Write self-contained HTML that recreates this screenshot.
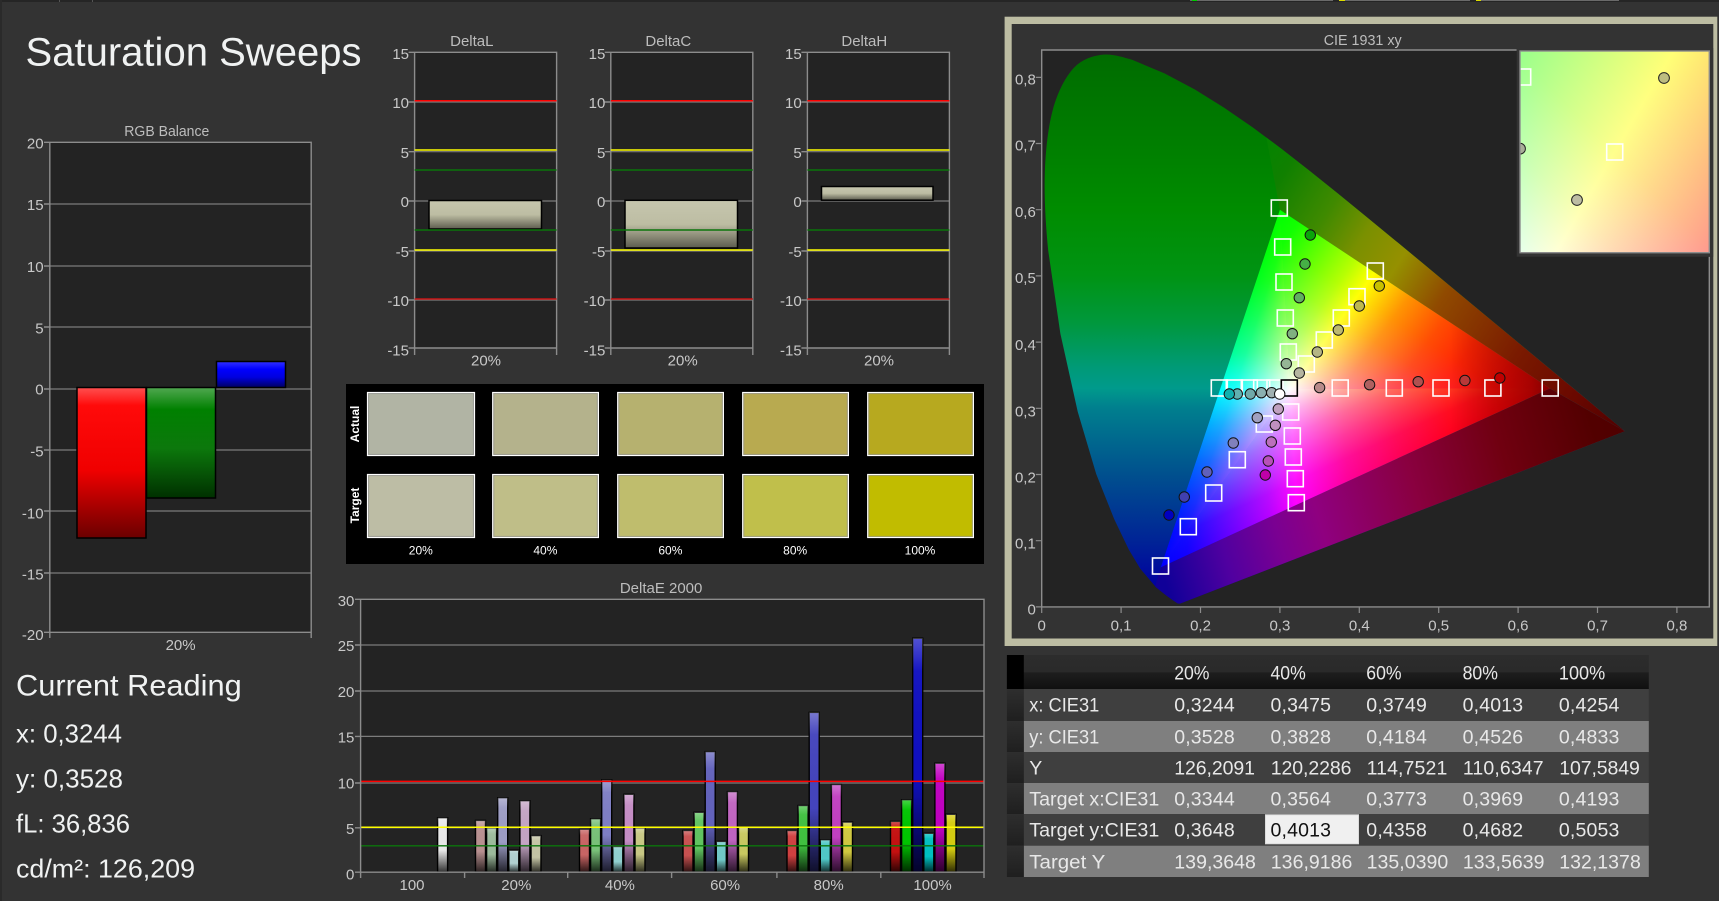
<!DOCTYPE html>
<html><head><meta charset="utf-8"><title>Saturation Sweeps</title>
<style>
html,body{margin:0;padding:0;background:#333;width:1719px;height:901px;overflow:hidden}
svg{display:block}
text{font-family:"Liberation Sans",sans-serif}
.a{font-size:15px;fill:#c8c8c8}
.t{font-size:15px;fill:#bdbdbd}
.e{text-anchor:end}
.m{text-anchor:middle}
.s{font-size:12px;fill:#fff;text-anchor:middle}
.b{font-size:12px;font-weight:bold;fill:#fff;text-anchor:middle}
.r{font-size:19.5px;fill:#e8e8e8}
.h{fill:#f0f2f2}
.sc{mix-blend-mode:screen}
</style></head><body>
<svg width="1719" height="901" viewBox="0 0 1719 901" xmlns="http://www.w3.org/2000/svg">
<defs>
<linearGradient id="gRed" x1="0" y1="0" x2="0" y2="1"><stop offset="0" stop-color="#ff5050"/><stop offset=".12" stop-color="#ff0a0a"/><stop offset=".55" stop-color="#f00000"/><stop offset="1" stop-color="#6a0000"/></linearGradient>
<linearGradient id="gGrn" x1="0" y1="0" x2="0" y2="1"><stop offset="0" stop-color="#50a850"/><stop offset=".2" stop-color="#008000"/><stop offset=".55" stop-color="#0c780c"/><stop offset="1" stop-color="#003000"/></linearGradient>
<linearGradient id="gBlu" x1="0" y1="0" x2="0" y2="1"><stop offset="0" stop-color="#3030ff"/><stop offset=".3" stop-color="#0000ff"/><stop offset=".6" stop-color="#0000e0"/><stop offset="1" stop-color="#000060"/></linearGradient>
<linearGradient id="gTan" x1="0" y1="0" x2="0" y2="1"><stop offset="0" stop-color="#c6c6ae"/><stop offset=".5" stop-color="#bdbda3"/><stop offset="1" stop-color="#5c5c4e"/></linearGradient>
<linearGradient id="gShade" x1="0" y1="0" x2="0" y2="1"><stop offset="0" stop-color="#fff" stop-opacity=".28"/><stop offset=".14" stop-color="#fff" stop-opacity=".03"/><stop offset=".6" stop-color="#000" stop-opacity="0"/><stop offset="1" stop-color="#000" stop-opacity=".78"/></linearGradient>
<linearGradient id="gHead" x1="0" y1="0" x2="0" y2="1"><stop offset="0" stop-color="#2c2c2c"/><stop offset=".5" stop-color="#2a2a2a"/><stop offset=".52" stop-color="#1e1e1e"/><stop offset="1" stop-color="#101010"/></linearGradient>
<linearGradient id="gSide" x1="0" y1="0" x2="0" y2="1"><stop offset="0" stop-color="#2e2e2e"/><stop offset="1" stop-color="#1f1f1f"/></linearGradient>

<linearGradient id="outerL" gradientUnits="userSpaceOnUse" x1="0" y1="54.9" x2="0" y2="606.9">
<stop offset="0" stop-color="#006c00"/><stop offset=".16" stop-color="#007e00"/><stop offset=".28" stop-color="#008c00"/><stop offset=".4" stop-color="#009414"/><stop offset=".484" stop-color="#00983c"/><stop offset=".568" stop-color="#009a78"/><stop offset=".604" stop-color="#009a8c"/><stop offset=".64" stop-color="#007f8e"/><stop offset=".76" stop-color="#00508e"/><stop offset=".88" stop-color="#002496"/><stop offset=".964" stop-color="#0000a0"/><stop offset="1" stop-color="#0000a0"/></linearGradient>
<linearGradient id="outerR" gradientUnits="userSpaceOnUse" x1="1228" y1="176.9" x2="1625" y2="431">
<stop offset="0" stop-color="#008400"/><stop offset=".096" stop-color="#108000"/><stop offset=".217" stop-color="#3f8a00"/><stop offset=".31" stop-color="#7a9000"/><stop offset=".403" stop-color="#959000"/><stop offset=".52" stop-color="#904a00"/><stop offset=".72" stop-color="#7a1a00"/><stop offset=".87" stop-color="#6a0800"/><stop offset="1" stop-color="#500000"/></linearGradient>
<linearGradient id="outerB" gradientUnits="userSpaceOnUse" x1="1160.8" y1="567.2" x2="1624.8" y2="431.2">
<stop offset="0" stop-color="#100098"/><stop offset=".134" stop-color="#5000a0"/><stop offset=".25" stop-color="#7a0092"/><stop offset=".341" stop-color="#8f0080"/><stop offset=".548" stop-color="#8a0040"/><stop offset=".746" stop-color="#700010"/><stop offset=".94" stop-color="#520000"/><stop offset="1" stop-color="#500000"/></linearGradient>

<!-- channel curve templates -->
<linearGradient id="sR"><stop offset="0" stop-color="#000"/><stop offset=".2" stop-color="#140000"/><stop offset=".5" stop-color="#660000"/><stop offset=".8" stop-color="#b80000"/><stop offset="1" stop-color="#f00"/></linearGradient>
<linearGradient id="sRL"><stop offset="0" stop-color="#000"/><stop offset=".2" stop-color="#1a0000"/><stop offset=".6" stop-color="#8c0000"/><stop offset=".8" stop-color="#c70000"/><stop offset="1" stop-color="#f00"/></linearGradient>
<linearGradient id="sG"><stop offset="0" stop-color="#000"/><stop offset=".2" stop-color="#000d00"/><stop offset=".4" stop-color="#003800"/><stop offset=".6" stop-color="#006b00"/><stop offset=".8" stop-color="#00ad00"/><stop offset="1" stop-color="#0f0"/></linearGradient>
<linearGradient id="sGL"><stop offset="0" stop-color="#000"/><stop offset=".2" stop-color="#000800"/><stop offset=".42" stop-color="#002400"/><stop offset=".6" stop-color="#004d00"/><stop offset=".8" stop-color="#009400"/><stop offset="1" stop-color="#0f0"/></linearGradient>
<linearGradient id="sB"><stop offset="0" stop-color="#000"/><stop offset=".2" stop-color="#000005"/><stop offset=".4" stop-color="#000021"/><stop offset=".6" stop-color="#000059"/><stop offset=".8" stop-color="#00009c"/><stop offset="1" stop-color="#00f"/></linearGradient>

<linearGradient id="t1R" href="#sR" gradientUnits="userSpaceOnUse" x1="1279.9" y1="209.7" x2="1371.7" y2="276.3"/>
<linearGradient id="t2G" href="#sGL" gradientUnits="userSpaceOnUse" x1="1549.9" y1="388.4" x2="1379.9" y2="265.1"/>
<linearGradient id="bTop" href="#sB" gradientUnits="userSpaceOnUse" x1="1369.4" y1="269" x2="1290" y2="389"/>
<linearGradient id="gBot" href="#sG" gradientUnits="userSpaceOnUse" x1="1335.1" y1="487" x2="1290" y2="389"/>
<linearGradient id="rLeft" href="#sRL" gradientUnits="userSpaceOnUse" x1="1227.1" y1="368" x2="1290" y2="389"/>
<linearGradient id="t3B" href="#sB" gradientUnits="userSpaceOnUse" x1="1549.9" y1="388.4" x2="1290.8" y2="402.9"/>
<linearGradient id="t4R" href="#sR" gradientUnits="userSpaceOnUse" x1="1160.8" y1="567.2" x2="1299.6" y2="559.4"/>
<linearGradient id="t5G" href="#sG" gradientUnits="userSpaceOnUse" x1="1160.8" y1="567.2" x2="1160.8" y2="389"/>
<linearGradient id="t6B" href="#sB" gradientUnits="userSpaceOnUse" x1="1279.9" y1="209.7" x2="1279.9" y2="389"/>

<linearGradient id="cDark" gradientUnits="userSpaceOnUse" x1="1450" y1="0" x2="1552" y2="0">
<stop offset="0" stop-color="#000" stop-opacity="0"/><stop offset=".42" stop-color="#000" stop-opacity=".2"/><stop offset=".8" stop-color="#000" stop-opacity=".35"/><stop offset="1" stop-color="#000" stop-opacity=".5"/></linearGradient>

<linearGradient id="iR" gradientUnits="userSpaceOnUse" x1="1554.7" y1="-10.4" x2="1670" y2="56.7"><stop offset="0" stop-color="#990000"/><stop offset="1" stop-color="#f00"/></linearGradient>
<linearGradient id="iG" gradientUnits="userSpaceOnUse" x1="1670" y1="56.7" x2="1785.3" y2="123.8"><stop offset="0" stop-color="#0f0"/><stop offset="1" stop-color="#009900"/></linearGradient>
<linearGradient id="iB" gradientUnits="userSpaceOnUse" x1="1520" y1="252.7" x2="1715.6" y2="57"><stop offset="0" stop-color="#0000eb"/><stop offset=".25" stop-color="#0000b4"/><stop offset=".5" stop-color="#00008c"/><stop offset="1" stop-color="#000070"/></linearGradient>

<clipPath id="locus"><path d="M1179.9 603.6L1177.8 603.5 1172.2 599.7 1166 595.2 1156 587.2 1140.2 568.6 1128.7 549.4 1114.2 519.1 1096.2 474 1077.7 411.6 1060.4 333.7 1048.2 250.5C1045.6 223.8 1044.05 196.8 1044.8 173.4C1045.55 150 1048.07 127.65 1052.7 110.3C1057.33 92.95 1064.6 78.53 1072.6 69.3C1080.6 60.07 1090.73 56.47 1100.7 54.9C1110.67 53.33 1121.77 56.82 1132.4 59.9L1164.5 73.4 1194.9 89.5 1224 107.6 1252.7 127.4 1281.2 148.6 1309.5 170.7 1337.9 193.5 1366.2 216.6 1394.3 239.7 1421.9 262.5 1448.6 284.8 1474.3 306.1 1498.4 326.1 1520.4 344.4 1539.5 360.3 1570.3 385.8 1590.8 402.8 1603.8 413.6 1618.1 425.5 1625 431.3Z"/></clipPath>
<clipPath id="tri"><polygon points="1549.9,388.4 1279.9,209.7 1160.8,567.2"/></clipPath>
<clipPath id="insetClip"><rect x="1520" y="51" width="189.3" height="201.7"/></clipPath>

<g id="dGrid">
<rect x="0" y="52.3" width="142" height="295.7" fill="#232323"/>
<path d="M0 102H142M0 151.7H142M0 201H142M0 251H142M0 300H142" stroke="#7c7c7c" stroke-width="1.2" fill="none"/>
<path d="M0 355V52.3H142V355M-6 52.3H0M-6 102H0M-6 151.7H0M-6 201H0M-6 251H0M-6 300H0M-6 348H142" stroke="#8c8c8c" stroke-width="1.4" fill="none"/>
</g>
<g id="dLines" fill="none" stroke-width="1.5">
<path d="M0 100.7H142" stroke="#f00"/>
<path d="M0 150H142M0 250H142" stroke="#ff0"/>
<path d="M0 170H142M0 230H142" stroke="#0b740b"/>
<path d="M0 299H142" stroke="#c81414"/>
</g>
</defs>

<rect width="1719" height="901" fill="#333"/>
<!-- top strip -->
<rect width="1719" height="2" fill="#252525"/>
<rect width="2" height="901" fill="#2a2a2a"/>
<rect x="59" y="0" width="1" height="2" fill="#555"/><rect x="92" y="0" width="1" height="2" fill="#555"/>
<rect x="1190" y="0" width="143" height="1" fill="#6a6a6a"/><rect x="1339" y="0" width="131" height="1" fill="#6a6a6a"/><rect x="1476" y="0" width="143" height="1" fill="#6a6a6a"/>
<rect x="1192" y="0" width="5" height="1" fill="#0c0"/><rect x="1339" y="0" width="6" height="1" fill="#dd0"/><rect x="1476" y="0" width="5" height="1" fill="#dd0"/>

<!-- Title -->
<text class="h" x="25.5" y="65.7" font-size="40" textLength="336" lengthAdjust="spacingAndGlyphs">Saturation Sweeps</text>

<!-- RGB Balance -->
<rect x="49.8" y="142.3" width="261.4" height="490" fill="#232323"/>
<path d="M49.8 204H311.2M49.8 266H311.2M49.8 327H311.2M49.8 389H311.2M49.8 450H311.2M49.8 511H311.2M49.8 573H311.2" stroke="#7c7c7c" stroke-width="1.2" fill="none"/>
<path d="M49.8 638V142.3H311.2V638M44 142.3H49.8M44 204H49.8M44 266H49.8M44 327H49.8M44 389H49.8M44 450H49.8M44 511H49.8M44 573H49.8M44 632.3H311.2" stroke="#8c8c8c" stroke-width="1.4" fill="none"/>
<rect x="77" y="387.5" width="69" height="150.5" fill="url(#gRed)" stroke="#000" stroke-width="1.5"/>
<rect x="146.5" y="387.5" width="69" height="110.5" fill="url(#gGrn)" stroke="#000" stroke-width="1.5"/>
<rect x="216.5" y="361.5" width="69" height="26" fill="url(#gBlu)" stroke="#000" stroke-width="1.5"/>
<text class="t m" x="166.8" y="136" textLength="85" lengthAdjust="spacingAndGlyphs">RGB Balance</text>
<text class="a e" x="43.6" y="148.7">20</text><text class="a e" x="43.6" y="210">15</text><text class="a e" x="43.6" y="272">10</text><text class="a e" x="43.6" y="333.3">5</text><text class="a e" x="43.6" y="394.7">0</text><text class="a e" x="43.6" y="456.5">-5</text><text class="a e" x="43.6" y="518.3">-10</text><text class="a e" x="43.6" y="579.3">-15</text><text class="a e" x="43.6" y="640">-20</text>
<text class="a m" x="180.6" y="650">20%</text>

<!-- Current Reading -->
<text class="h" x="16" y="695.7" font-size="30" textLength="225.7" lengthAdjust="spacingAndGlyphs">Current Reading</text>
<text class="h" x="16" y="742.7" font-size="26" textLength="106" lengthAdjust="spacingAndGlyphs">x: 0,3244</text>
<text class="h" x="16" y="787.3" font-size="26" textLength="107" lengthAdjust="spacingAndGlyphs">y: 0,3528</text>
<text class="h" x="16" y="832.3" font-size="26" textLength="114" lengthAdjust="spacingAndGlyphs">fL: 36,836</text>
<text class="h" x="16" y="877.3" font-size="26" textLength="179" lengthAdjust="spacingAndGlyphs">cd/m²: 126,209</text>

<!-- DeltaL -->
<use href="#dGrid" x="414.6"/>
<rect x="429" y="200.5" width="112.5" height="28.5" fill="url(#gTan)" stroke="#000" stroke-width="1.5"/>
<use href="#dLines" x="414.6"/>
<text class="t m" x="471.8" y="46">DeltaL</text>
<text class="a e" x="409" y="59">15</text><text class="a e" x="409" y="108">10</text><text class="a e" x="409" y="158">5</text><text class="a e" x="409" y="207">0</text><text class="a e" x="409" y="257">-5</text><text class="a e" x="409" y="306">-10</text><text class="a e" x="409" y="355.7">-15</text>
<text class="a m" x="486" y="365.7">20%</text>

<!-- DeltaC -->
<use href="#dGrid" x="610.8"/>
<rect x="625" y="200.3" width="112.5" height="47.7" fill="url(#gTan)" stroke="#000" stroke-width="1.5"/>
<use href="#dLines" x="610.8"/>
<text class="t m" x="668.3" y="46">DeltaC</text>
<text class="a e" x="605.3" y="59">15</text><text class="a e" x="605.3" y="108">10</text><text class="a e" x="605.3" y="158">5</text><text class="a e" x="605.3" y="207">0</text><text class="a e" x="605.3" y="257">-5</text><text class="a e" x="605.3" y="306">-10</text><text class="a e" x="605.3" y="355.7">-15</text>
<text class="a m" x="682.7" y="365.7">20%</text>

<!-- DeltaH -->
<use href="#dGrid" x="807.4"/>
<rect x="821.5" y="186.5" width="111.5" height="13.7" fill="url(#gTan)" stroke="#000" stroke-width="1.5"/>
<use href="#dLines" x="807.4"/>
<text class="t m" x="864.3" y="46">DeltaH</text>
<text class="a e" x="801.7" y="59">15</text><text class="a e" x="801.7" y="108">10</text><text class="a e" x="801.7" y="158">5</text><text class="a e" x="801.7" y="207">0</text><text class="a e" x="801.7" y="257">-5</text><text class="a e" x="801.7" y="306">-10</text><text class="a e" x="801.7" y="355.7">-15</text>
<text class="a m" x="879" y="365.7">20%</text>

<!-- Swatches -->
<rect x="346" y="384" width="638" height="180" fill="#000"/>
<g stroke="#fff" stroke-width="1.2">
<rect x="367.5" y="392.5" width="107" height="63" fill="#b1b4a4"/><rect x="492.7" y="392.5" width="105.7" height="63" fill="#b4b28c"/><rect x="617.7" y="392.5" width="105.7" height="63" fill="#b6b16f"/><rect x="742.7" y="392.5" width="105.7" height="63" fill="#b8aa50"/><rect x="867.7" y="392.5" width="105.7" height="63" fill="#b7a91f"/>
<rect x="367.5" y="474.5" width="107" height="63" fill="#bdbda5"/><rect x="492.7" y="474.5" width="105.7" height="63" fill="#bfbe88"/><rect x="617.7" y="474.5" width="105.7" height="63" fill="#bfbd6d"/><rect x="742.7" y="474.5" width="105.7" height="63" fill="#c0bf4b"/><rect x="867.7" y="474.5" width="105.7" height="63" fill="#c1bc00"/>
</g>
<g fill="none" stroke="#8f8f8f" stroke-width="1" opacity=".7">
<rect x="368.6" y="393.6" width="104.8" height="60.8"/><rect x="493.8" y="393.6" width="103.5" height="60.8"/><rect x="618.8" y="393.6" width="103.5" height="60.8"/><rect x="743.8" y="393.6" width="103.5" height="60.8"/><rect x="868.8" y="393.6" width="103.5" height="60.8"/>
<rect x="368.6" y="475.6" width="104.8" height="60.8"/><rect x="493.8" y="475.6" width="103.5" height="60.8"/><rect x="618.8" y="475.6" width="103.5" height="60.8"/><rect x="743.8" y="475.6" width="103.5" height="60.8"/><rect x="868.8" y="475.6" width="103.5" height="60.8"/>
</g>
<text class="b" transform="translate(359 424) rotate(-90)">Actual</text>
<text class="b" transform="translate(359 505.5) rotate(-90)">Target</text>
<text class="s" x="420.8" y="554.6">20%</text><text class="s" x="545.4" y="554.6">40%</text><text class="s" x="670.4" y="554.6">60%</text><text class="s" x="795.2" y="554.6">80%</text><text class="s" x="920" y="554.6">100%</text>

<!-- DeltaE 2000 -->
<rect x="360.6" y="599.3" width="623.4" height="273" fill="#232323"/>
<path d="M360.6 645H984M360.6 691H984M360.6 736.4H984M360.6 783H984M360.6 827.8H984" stroke="#7c7c7c" stroke-width="1.2" fill="none"/>
<g stroke="#000" stroke-width="1.4">
<rect x="437.6" y="817.7" width="10" height="54.3" fill="#e8e8e8"/>
<rect x="475.5" y="820.4" width="10" height="51.6" fill="#b89090"/><rect x="486.6" y="827.8" width="10" height="44.2" fill="#9cba9c"/><rect x="497.7" y="797.7" width="10" height="74.3" fill="#9c9cc4"/><rect x="508.8" y="850.2" width="10" height="21.8" fill="#b0d0d0"/><rect x="519.9" y="800.7" width="10" height="71.3" fill="#c4a4c4"/><rect x="531" y="835.6" width="10" height="36.4" fill="#c4c4a4"/>
<rect x="579.5" y="829.2" width="10" height="42.8" fill="#c86464"/><rect x="590.6" y="818.7" width="10" height="53.3" fill="#78c078"/><rect x="601.7" y="779.8" width="10" height="92.2" fill="#7e7ec4"/><rect x="612.8" y="846.5" width="10" height="25.5" fill="#90d0d0"/><rect x="623.9" y="794.3" width="10" height="77.7" fill="#c48cc4"/><rect x="635" y="827.8" width="10" height="44.2" fill="#c8c884"/>
<rect x="683" y="830.5" width="10" height="41.5" fill="#c85050"/><rect x="694.1" y="812.3" width="10" height="59.7" fill="#60c460"/><rect x="705.2" y="751.6" width="10" height="120.4" fill="#6262bc"/><rect x="716.3" y="841.4" width="10" height="30.6" fill="#70c8c8"/><rect x="727.4" y="791.6" width="10" height="80.4" fill="#c064c0"/><rect x="738.5" y="827.2" width="10" height="44.8" fill="#c8c860"/>
<rect x="787" y="830.5" width="10" height="41.5" fill="#d04040"/><rect x="798.1" y="805.5" width="10" height="66.5" fill="#40c040"/><rect x="809.2" y="712.4" width="10" height="159.6" fill="#4444bc"/><rect x="820.3" y="839.7" width="10" height="32.3" fill="#50c8c8"/><rect x="831.4" y="784.5" width="10" height="87.5" fill="#c040c0"/><rect x="842.5" y="822.1" width="10" height="49.9" fill="#d0c840"/>
<rect x="890.5" y="821.4" width="10" height="50.6" fill="#c41010"/><rect x="901.6" y="799.7" width="10" height="72.3" fill="#00c400"/><rect x="912.7" y="638.2" width="10" height="233.8" fill="#1010c0"/><rect x="923.8" y="833.3" width="10" height="38.7" fill="#00c0c0"/><rect x="934.9" y="763.2" width="10" height="108.8" fill="#c000c0"/><rect x="946" y="814.3" width="10" height="57.7" fill="#d4cc10"/>
</g>
<g fill="url(#gShade)">
<rect x="437.6" y="817.7" width="10" height="54.3"/>
<rect x="475.5" y="820.4" width="10" height="51.6"/><rect x="486.6" y="827.8" width="10" height="44.2"/><rect x="497.7" y="797.7" width="10" height="74.3"/><rect x="508.8" y="850.2" width="10" height="21.8"/><rect x="519.9" y="800.7" width="10" height="71.3"/><rect x="531" y="835.6" width="10" height="36.4"/>
<rect x="579.5" y="829.2" width="10" height="42.8"/><rect x="590.6" y="818.7" width="10" height="53.3"/><rect x="601.7" y="779.8" width="10" height="92.2"/><rect x="612.8" y="846.5" width="10" height="25.5"/><rect x="623.9" y="794.3" width="10" height="77.7"/><rect x="635" y="827.8" width="10" height="44.2"/>
<rect x="683" y="830.5" width="10" height="41.5"/><rect x="694.1" y="812.3" width="10" height="59.7"/><rect x="705.2" y="751.6" width="10" height="120.4"/><rect x="716.3" y="841.4" width="10" height="30.6"/><rect x="727.4" y="791.6" width="10" height="80.4"/><rect x="738.5" y="827.2" width="10" height="44.8"/>
<rect x="787" y="830.5" width="10" height="41.5"/><rect x="798.1" y="805.5" width="10" height="66.5"/><rect x="809.2" y="712.4" width="10" height="159.6"/><rect x="820.3" y="839.7" width="10" height="32.3"/><rect x="831.4" y="784.5" width="10" height="87.5"/><rect x="842.5" y="822.1" width="10" height="49.9"/>
<rect x="890.5" y="821.4" width="10" height="50.6"/><rect x="901.6" y="799.7" width="10" height="72.3"/><rect x="912.7" y="638.2" width="10" height="233.8"/><rect x="923.8" y="833.3" width="10" height="38.7"/><rect x="934.9" y="763.2" width="10" height="108.8"/><rect x="946" y="814.3" width="10" height="57.7"/>
</g>
<path d="M360.6 781.4H984" stroke="#f00" stroke-width="1.5"/>
<path d="M360.6 827.2H984" stroke="#ff0" stroke-width="1.5"/>
<path d="M360.6 845.8H984" stroke="#0b740b" stroke-width="1.3"/>
<path d="M360.6 878V599.3H984V878M355 599.3H360.6M355 645H360.6M355 691H360.6M355 736.4H360.6M355 783H360.6M355 827.8H360.6M355 872.2H984M464.6 872.2V878M567.7 872.2V878M671.6 872.2V878M776.9 872.2V878M880.8 872.2V878" stroke="#8c8c8c" stroke-width="1.4" fill="none"/>
<text class="t m" x="661.1" y="592.8">DeltaE 2000</text>
<text class="a e" x="354.4" y="606">30</text><text class="a e" x="354.4" y="651">25</text><text class="a e" x="354.4" y="697">20</text><text class="a e" x="354.4" y="742.3">15</text><text class="a e" x="354.4" y="788.7">10</text><text class="a e" x="354.4" y="834">5</text><text class="a e" x="354.4" y="879.3">0</text>
<text class="a m" x="412" y="889.8">100</text><text class="a m" x="516.3" y="889.8">20%</text><text class="a m" x="619.9" y="889.8">40%</text><text class="a m" x="725.1" y="889.8">60%</text><text class="a m" x="828.7" y="889.8">80%</text><text class="a m" x="932.6" y="889.8">100%</text>

<!-- CIE frame -->
<rect x="1004.6" y="16.7" width="712.7" height="629.3" fill="#bdbda3"/>
<rect x="1011.7" y="24" width="701.6" height="614.5" fill="#333"/>
<rect x="1041.7" y="50" width="667.6" height="556.9" fill="#232323"/>
<text class="t m" x="1362.7" y="45" textLength="78" lengthAdjust="spacingAndGlyphs">CIE 1931 xy</text>

<!-- Gamut -->
<g clip-path="url(#locus)">
<rect x="1040" y="50" width="600" height="560" fill="url(#outerL)"/>
<polygon points="1279.9,209.7 1250,50 1719,50 1719,500 1625,431.3 1549.9,388.4" fill="url(#outerR)"/>
<polygon points="1160.8,567.2 1145,620 1719,620 1719,431.3 1625,431.3 1549.9,388.4" fill="url(#outerB)"/>
</g>
<g clip-path="url(#tri)">
<g style="isolation:isolate" shape-rendering="crispEdges">
<rect x="1150" y="200" width="410" height="380" fill="#000"/>
<!-- W G Y -->
<polygon class="sc" points="1290,389 1279.7,206.1 1376.1,270.3" fill="#0f0"/>
<polygon class="sc" points="1290,389 1279.7,206.1 1376.1,270.3" fill="url(#t1R)"/>
<polygon class="sc" points="1290,389 1279.7,206.1 1376.1,270.3" fill="url(#bTop)"/>
<!-- W Y R -->
<polygon class="sc" points="1290,389 1376.1,270.3 1555.1,388.4" fill="#f00"/>
<polygon class="sc" points="1290,389 1376.1,270.3 1555.1,388.4" fill="url(#t2G)"/>
<polygon class="sc" points="1290,389 1376.1,270.3 1555.1,388.4" fill="url(#bTop)"/>
<!-- W R M -->
<polygon class="sc" points="1290,389 1555.1,388.4 1296.6,507.3" fill="#f00"/>
<polygon class="sc" points="1290,389 1555.1,388.4 1296.6,507.3" fill="url(#gBot)"/>
<polygon class="sc" points="1290,389 1555.1,388.4 1296.6,507.3" fill="url(#t3B)"/>
<!-- W M B -->
<polygon class="sc" points="1290,389 1296.6,507.3 1158.2,570.8" fill="#00f"/>
<polygon class="sc" points="1290,389 1296.6,507.3 1158.2,570.8" fill="url(#t4R)"/>
<polygon class="sc" points="1290,389 1296.6,507.3 1158.2,570.8" fill="url(#gBot)"/>
<!-- W B C -->
<polygon class="sc" points="1290,389 1158.2,570.8 1218.9,388.4" fill="#00f"/>
<polygon class="sc" points="1290,389 1158.2,570.8 1218.9,388.4" fill="url(#t5G)"/>
<polygon class="sc" points="1290,389 1158.2,570.8 1218.9,388.4" fill="url(#rLeft)"/>
<!-- W C G -->
<polygon class="sc" points="1290,389 1218.9,388.4 1279.7,206.1" fill="#0f0"/>
<polygon class="sc" points="1290,389 1218.9,388.4 1279.7,206.1" fill="url(#t6B)"/>
<polygon class="sc" points="1290,389 1218.9,388.4 1279.7,206.1" fill="url(#rLeft)"/>
</g>
<rect x="1150" y="200" width="410" height="380" fill="url(#cDark)"/>
</g>

<!-- Target squares -->
<g fill="none" stroke="#fff" stroke-width="1.6">
<rect x="1271.3" y="200" width="16" height="16"/><rect x="1274.7" y="239" width="16" height="16"/><rect x="1276" y="274" width="16" height="16"/><rect x="1277.3" y="310" width="16" height="16"/><rect x="1280.3" y="344" width="16" height="16"/>
<rect x="1367.3" y="263" width="16" height="16"/><rect x="1349" y="288.7" width="16" height="16"/><rect x="1333.3" y="310" width="16" height="16"/><rect x="1316.3" y="332" width="16" height="16"/><rect x="1298.3" y="356" width="16" height="16"/>
<rect x="1211.3" y="380" width="16" height="16"/><rect x="1226.3" y="380" width="16" height="16"/><rect x="1241.3" y="380" width="16" height="16"/><rect x="1253.7" y="380" width="16" height="16"/><rect x="1267" y="380" width="16" height="16"/>
<rect x="1332.2" y="380" width="16" height="16"/><rect x="1386.3" y="380" width="16" height="16"/><rect x="1433" y="380" width="16" height="16"/><rect x="1484.9" y="380" width="16" height="16"/><rect x="1542.2" y="380" width="16" height="16"/>
<rect x="1282.7" y="404" width="16" height="16"/><rect x="1284.3" y="428" width="16" height="16"/><rect x="1285.3" y="449" width="16" height="16"/><rect x="1287.3" y="470.7" width="16" height="16"/><rect x="1288.3" y="494.7" width="16" height="16"/>
<rect x="1256.3" y="416" width="16" height="16"/><rect x="1229.3" y="451.7" width="16" height="16"/><rect x="1205.7" y="485" width="16" height="16"/><rect x="1180.3" y="518.7" width="16" height="16"/><rect x="1152.5" y="558" width="16" height="16"/>
</g>
<rect x="1281.3" y="380" width="16" height="16" fill="none" stroke="#000" stroke-width="1.6"/>

<!-- Actual circles -->
<g stroke="#111" stroke-width="1">
<circle cx="1310.3" cy="235" r="5.2" fill="#0aa40a"/><circle cx="1305" cy="264" r="5.2" fill="#45b045"/><circle cx="1299.3" cy="297.7" r="5.2" fill="#60b060"/><circle cx="1292.3" cy="333.7" r="5.2" fill="#80b080"/><circle cx="1286.3" cy="363.7" r="5.2" fill="#95b595"/>
<circle cx="1379.3" cy="286" r="5.2" fill="#c8c000"/><circle cx="1359.3" cy="306" r="5.2" fill="#bdb850"/><circle cx="1338.3" cy="330" r="5.2" fill="#bcb870"/><circle cx="1317.3" cy="352" r="5.2" fill="#b5b585"/><circle cx="1299.3" cy="373" r="5.2" fill="#b5b5a0"/>
<circle cx="1237.3" cy="394" r="5.2" fill="#60b0b0"/><circle cx="1229.3" cy="394" r="5.2" fill="#10b0b0"/><circle cx="1250.3" cy="394" r="5.2" fill="#70aaaa"/><circle cx="1261.3" cy="392.7" r="5.2" fill="#8ab0b0"/><circle cx="1271.7" cy="392.7" r="5.2" fill="#a0b0b0"/><circle cx="1279.7" cy="394" r="5.2" fill="#fff"/>
<circle cx="1319.6" cy="387.6" r="5.2" fill="#b88a8a"/><circle cx="1369.6" cy="384.7" r="5.2" fill="#b06060"/><circle cx="1418.2" cy="381.7" r="5.2" fill="#b05050"/><circle cx="1464.9" cy="380.5" r="5.2" fill="#b83838"/><circle cx="1499.8" cy="378" r="5.2" fill="#c00000"/>
<circle cx="1278.3" cy="409" r="5.2" fill="#c0a0c0"/><circle cx="1275.3" cy="425.3" r="5.2" fill="#c090c0"/><circle cx="1271.3" cy="442" r="5.2" fill="#bb70bb"/><circle cx="1268.3" cy="461" r="5.2" fill="#b850b8"/><circle cx="1265.3" cy="475" r="5.2" fill="#c000a8"/>
<circle cx="1257.3" cy="417.7" r="5.2" fill="#a0a0c0"/><circle cx="1233.3" cy="443" r="5.2" fill="#8080bb"/><circle cx="1207" cy="472" r="5.2" fill="#6060bb"/><circle cx="1184.3" cy="497" r="5.2" fill="#4040b0"/><circle cx="1169" cy="515" r="5.2" fill="#0000c0"/>
</g>

<!-- Plot axes -->
<path d="M1516.7 50H1041.7V606.9H1709.3V256.7" fill="none" stroke="#8c8c8c" stroke-width="1.4"/>
<path d="M1035.8 77.4H1041.7M1035.8 143.5H1041.7M1035.8 209.7H1041.7M1035.8 275.9H1041.7M1035.8 342.1H1041.7M1035.8 408.3H1041.7M1035.8 474.5H1041.7M1035.8 540.7H1041.7M1035.8 606.9H1041.7M1041.7 606.9V613M1121.1 606.9V613M1200.5 606.9V613M1279.9 606.9V613M1359.3 606.9V613M1438.7 606.9V613M1518.1 606.9V613M1597.5 606.9V613M1676.9 606.9V613" stroke="#8c8c8c" stroke-width="1.2" fill="none"/>
<text class="a e" x="1035.8" y="84.6">0,8</text><text class="a e" x="1035.8" y="150.7">0,7</text><text class="a e" x="1035.8" y="217">0,6</text><text class="a e" x="1035.8" y="282.8">0,5</text><text class="a e" x="1035.8" y="350">0,4</text><text class="a e" x="1035.8" y="416.7">0,3</text><text class="a e" x="1035.8" y="482.7">0,2</text><text class="a e" x="1035.8" y="548.4">0,1</text><text class="a e" x="1035.8" y="614.5">0</text>
<text class="a m" x="1041.7" y="630.5">0</text><text class="a m" x="1121.1" y="630.5">0,1</text><text class="a m" x="1200.5" y="630.5">0,2</text><text class="a m" x="1279.9" y="630.5">0,3</text><text class="a m" x="1359.3" y="630.5">0,4</text><text class="a m" x="1438.7" y="630.5">0,5</text><text class="a m" x="1518.1" y="630.5">0,6</text><text class="a m" x="1597.5" y="630.5">0,7</text><text class="a m" x="1676.9" y="630.5">0,8</text>

<!-- Inset -->
<rect x="1516.7" y="48" width="196.5" height="208.7" fill="#333"/>
<g clip-path="url(#insetClip)">
<g style="isolation:isolate">
<rect x="1520" y="51" width="190" height="202" fill="#000"/>
<rect x="1520" y="51" width="190" height="202" fill="url(#iR)" style="mix-blend-mode:screen"/>
<rect x="1520" y="51" width="190" height="202" fill="url(#iG)" style="mix-blend-mode:screen"/>
<rect x="1520" y="51" width="190" height="202" fill="url(#iB)" style="mix-blend-mode:screen"/>
</g>
<rect x="1514.7" y="69" width="16" height="16" fill="none" stroke="#fff" stroke-width="1.6"/>
<rect x="1606.7" y="144" width="16" height="16" fill="none" stroke="#fff" stroke-width="1.6"/>
<circle cx="1664" cy="78" r="5.4" fill="#bdbd80" stroke="#222" stroke-width="1"/>
<circle cx="1577" cy="200" r="5.4" fill="#bdbda3" stroke="#222" stroke-width="1"/>
<circle cx="1520" cy="148.7" r="5.4" fill="#a8ad98" stroke="#222" stroke-width="1"/>
</g>
<rect x="1520" y="51" width="189.3" height="201.7" fill="none" stroke="#8c8c8c" stroke-width="1.4"/>

<!-- Table -->
<rect x="1006.9" y="655" width="641.9" height="34" fill="url(#gHead)"/>
<rect x="1006.9" y="655" width="16.9" height="34" fill="#000"/>
<rect x="1023.8" y="689" width="625" height="32" fill="#3f3f3f"/>
<rect x="1023.8" y="721" width="625" height="31" fill="#7f7f7f"/>
<rect x="1023.8" y="752" width="625" height="31" fill="#3f3f3f"/>
<rect x="1023.8" y="783" width="625" height="31" fill="#7f7f7f"/>
<rect x="1023.8" y="814" width="625" height="31.7" fill="#3f3f3f"/>
<rect x="1023.8" y="845.7" width="625" height="31.3" fill="#7f7f7f"/>
<g fill="url(#gSide)"><rect x="1006.9" y="689" width="16.9" height="32"/><rect x="1006.9" y="721" width="16.9" height="31"/><rect x="1006.9" y="752" width="16.9" height="31"/><rect x="1006.9" y="783" width="16.9" height="31"/><rect x="1006.9" y="814" width="16.9" height="31.7"/><rect x="1006.9" y="845.7" width="16.9" height="31.3"/></g>
<rect x="1265.5" y="814.8" width="93" height="29" fill="#f0f0f0" stroke="#dcdcdc" stroke-width="1"/>

<text class="r" x="1174.2" y="679.3" textLength="35.3" lengthAdjust="spacingAndGlyphs">20%</text><text class="r" x="1270.5" y="679.3" textLength="35.3" lengthAdjust="spacingAndGlyphs">40%</text><text class="r" x="1366.3" y="679.3" textLength="35.3" lengthAdjust="spacingAndGlyphs">60%</text><text class="r" x="1462.6" y="679.3" textLength="35.3" lengthAdjust="spacingAndGlyphs">80%</text><text class="r" x="1558.9" y="679.3" textLength="46.3" lengthAdjust="spacingAndGlyphs">100%</text>

<text class="r" x="1029.3" y="711.7" textLength="70" lengthAdjust="spacingAndGlyphs">x: CIE31</text>
<text class="r" x="1174.2" y="711.7" textLength="60.5">0,3244</text><text class="r" x="1270.5" y="711.7" textLength="60.5">0,3475</text><text class="r" x="1366.3" y="711.7" textLength="60.5">0,3749</text><text class="r" x="1462.6" y="711.7" textLength="60.5">0,4013</text><text class="r" x="1558.9" y="711.7" textLength="60.5">0,4254</text>

<text class="r" x="1029.3" y="743.3" textLength="70" lengthAdjust="spacingAndGlyphs">y: CIE31</text>
<text class="r" x="1174.2" y="743.3" textLength="60.5">0,3528</text><text class="r" x="1270.5" y="743.3" textLength="60.5">0,3828</text><text class="r" x="1366.3" y="743.3" textLength="60.5">0,4184</text><text class="r" x="1462.6" y="743.3" textLength="60.5">0,4526</text><text class="r" x="1558.9" y="743.3" textLength="60.5">0,4833</text>

<text class="r" x="1029.3" y="774.7">Y</text>
<text class="r" x="1174.3" y="774.7" textLength="80.7">126,2091</text><text class="r" x="1270.8" y="774.7" textLength="80.7">120,2286</text><text class="r" x="1366.6" y="774.7" textLength="80.7">114,7521</text><text class="r" x="1462.9" y="774.7" textLength="80.7">110,6347</text><text class="r" x="1559.2" y="774.7" textLength="80.7">107,5849</text>

<text class="r" x="1029.3" y="805.7" textLength="130" lengthAdjust="spacingAndGlyphs">Target x:CIE31</text>
<text class="r" x="1174.2" y="805.7" textLength="60.5">0,3344</text><text class="r" x="1270.5" y="805.7" textLength="60.5">0,3564</text><text class="r" x="1366.3" y="805.7" textLength="60.5">0,3773</text><text class="r" x="1462.6" y="805.7" textLength="60.5">0,3969</text><text class="r" x="1558.9" y="805.7" textLength="60.5">0,4193</text>

<text class="r" x="1029.3" y="836.7" textLength="130" lengthAdjust="spacingAndGlyphs">Target y:CIE31</text>
<text class="r" x="1174.2" y="836.7" textLength="60.5">0,3648</text><text class="r" x="1270.5" y="836.7" textLength="60.5" style="fill:#111">0,4013</text><text class="r" x="1366.3" y="836.7" textLength="60.5">0,4358</text><text class="r" x="1462.6" y="836.7" textLength="60.5">0,4682</text><text class="r" x="1558.9" y="836.7" textLength="60.5">0,5053</text>

<text class="r" x="1029.3" y="868.7" textLength="76" lengthAdjust="spacingAndGlyphs">Target Y</text>
<text class="r" x="1174.3" y="868.7" textLength="81.6">139,3648</text><text class="r" x="1270.8" y="868.7" textLength="81.6">136,9186</text><text class="r" x="1366.6" y="868.7" textLength="81.6">135,0390</text><text class="r" x="1462.9" y="868.7" textLength="81.6">133,5639</text><text class="r" x="1559.2" y="868.7" textLength="81.6">132,1378</text>
</svg>
</body></html>
